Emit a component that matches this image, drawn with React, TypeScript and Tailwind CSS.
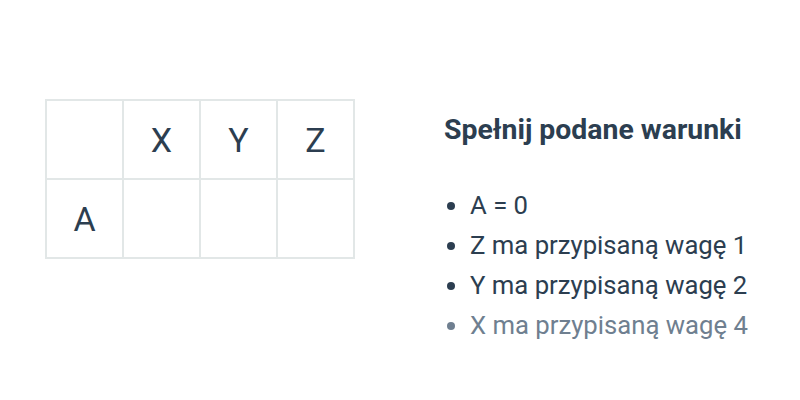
const headers = ['', 'X', 'Y', 'Z'];
const rowCells = ['A', '', '', ''];

const conditions = [
  { text: 'A = 0', faded: false },
  { text: 'Z ma przypisaną wagę 1', faded: false },
  { text: 'Y ma przypisaną wagę 2', faded: false },
  { text: 'X ma przypisaną wagę 4', faded: true },
];

export default function App() {
  return (
    <div
      className="flex h-[400px] w-[800px] items-start bg-white pl-[45px] pt-[99px] text-[#2c3e50]"
      style={{ fontFamily: 'Roboto, "Liberation Sans", sans-serif' }}
    >
      <table className="border-collapse">
        <tbody>
          {[headers, rowCells].map((row, r) => (
            <tr key={r}>
              {row.map((cell, c) => (
                <td
                  key={c}
                  className="h-[79px] w-[77px] border-2 border-[#e2e7e7] p-0 text-center align-middle text-[34px] leading-none"
                >
                  {cell}
                </td>
              ))}
            </tr>
          ))}
        </tbody>
      </table>

      <div className="ml-[89px] mt-[12px]">
        <h2 className="text-[28.4px] font-bold leading-[38px]">Spełnij podane warunki</h2>
        <ul className="mt-[36px] list-disc pl-[26px] text-[25.7px] leading-[40px] marker:text-[#2c3e50]">
          {conditions.map((item) => (
            <li key={item.text} className={item.faded ? 'text-[#6f7f90] marker:text-[#6f7f90]' : ''}>
              {item.text}
            </li>
          ))}
        </ul>
      </div>
    </div>
  );
}
